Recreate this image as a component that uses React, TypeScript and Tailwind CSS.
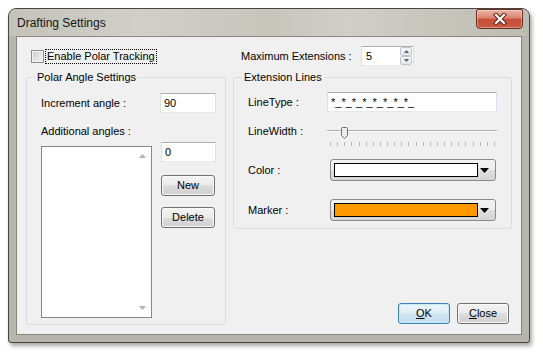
import React from "react";

function Checkbox() {
  return (
    <span className="w-[13px] h-[13px] border border-[#8e8f8f] bg-white flex items-center justify-center">
      <span className="w-[11px] h-[11px] border border-[#f4f4f4] bg-gradient-to-br from-[#cfcfcf] to-[#f6f6f6]" />
    </span>
  );
}

function TextBox({ value, className = "" }: { value: string; className?: string }) {
  return (
    <div
      className={
        "h-[20px] shrink-0 border border-[#abadb3] border-x-[#dbdfe6] border-b-[#e3e9ef] bg-white flex items-center pl-[3px] leading-[13px] " +
        className
      }
    >
      {value}
    </div>
  );
}

function Button({ children, def = false, className = "" }: { children: React.ReactNode; def?: boolean; className?: string }) {
  return (
    <div
      className={
        "h-[21px] shrink-0 rounded-[3px] border flex items-center justify-center leading-[13px] " +
        (def
          ? "border-[#3c7fb1] bg-[linear-gradient(#eef6fb,#e0eef7_50%,#d0e5f2_50%,#c5deee)] shadow-[inset_0_0_0_1px_#c6ebfb] "
          : "border-[#707070] bg-[linear-gradient(#f2f2f2,#ebebeb_50%,#dddddd_50%,#cfcfcf)] shadow-[inset_0_0_0_1px_#fbfbfb] ") +
        className
      }
    >
      {children}
    </div>
  );
}

function Combo({ color }: { color: string }) {
  return (
    <div className="ml-[3px] w-[166px] h-[22px] rounded-[3px] border border-[#8a8a8a] bg-[linear-gradient(#f4f4f4,#ececec_50%,#dfdfdf_50%,#d6d6d6)] flex items-center pl-[3px] pr-[6px]">
      <div className="w-[144px] h-[14px] border border-black" style={{ backgroundColor: color }} />
      <svg width="9" height="5" viewBox="0 0 9 5" className="ml-auto">
        <path d="M0 0 L9 0 L4.5 5 Z" fill="#000" />
      </svg>
    </div>
  );
}

function SpinBox() {
  return (
    <div className="w-[53px] h-[20px] border border-[#abadb3] border-x-[#dbdfe6] border-b-[#e3e9ef] bg-white flex items-center pl-[4px] pr-[1px] leading-[13px]">
      <span>5</span>
      <div className="ml-auto flex flex-col">
        <div className="w-[12px] h-[9px] border border-[#c2c8ce] rounded-[2px] bg-gradient-to-b from-[#f6f6f6] to-[#e2e5e8] flex items-center justify-center">
          <svg width="5" height="3" viewBox="0 0 5 3">
            <path d="M0 3 L5 3 L2.5 0 Z" fill="#4d6185" />
          </svg>
        </div>
        <div className="w-[12px] h-[9px] border border-[#c2c8ce] rounded-[2px] bg-gradient-to-b from-[#f6f6f6] to-[#e2e5e8] flex items-center justify-center">
          <svg width="5" height="3" viewBox="0 0 5 3">
            <path d="M0 0 L5 0 L2.5 3 Z" fill="#4d6185" />
          </svg>
        </div>
      </div>
    </div>
  );
}

function Slider() {
  const ticks = Array.from({ length: 24 }, (_, i) => i);
  return (
    <div className="w-[170px] h-[27px] flex flex-col">
      <div className="h-[12px] flex items-center relative">
        <div className="w-full h-[2px] border-t border-[#b0b0b0] border-b border-b-white bg-[#e7eaea]" />
        <svg width="7" height="12" viewBox="0 0 7 12" className="absolute left-[14px] top-[2px]">
          <path d="M0.5 1.5 Q0.5 0.5 1.5 0.5 L5.5 0.5 Q6.5 0.5 6.5 1.5 L6.5 8.5 L3.5 11.5 L0.5 8.5 Z" fill="#ececec" stroke="#707070" />
        </svg>
      </div>
      <div className="mt-[5px] pl-[3px] pr-[2px] flex justify-between">
        {ticks.map((t) => (
          <span key={t} className="w-[1px] h-[4px] bg-[#b9b9b9]" />
        ))}
      </div>
    </div>
  );
}

export default function App() {
  return (
    <div className="w-[543px] h-[352px] bg-white font-['Liberation_Sans',Arial,sans-serif] text-[11px] text-black">
      <div className="pl-[8px] pt-[8px]">
        <div className="w-[522px] h-[335px] flex flex-col rounded-t-[8px] rounded-b-[3px] border border-[#45453f] bg-[#b6b6ac] shadow-[2px_3px_4px_rgba(0,0,0,0.35)]">
          {/* Title bar */}
          <div className="h-[27px] flex items-start justify-between rounded-t-[7px] bg-[linear-gradient(90deg,#c3c3ba,#d0d0c8_25%,#c6c6bd_50%,#cfcfc7_65%,#bcbcb2)] pl-[8px] pr-[6px]">
            <span className="mt-[7px] text-[12px] leading-[15px] text-[#151515]">Drafting Settings</span>
            <div className="w-[47px] h-[20px] rounded-b-[4px] rounded-t-[2px] border border-[#6a2d22] bg-[linear-gradient(#eab2a4,#d98472_45%,#c8503a_50%,#c9583f)] flex items-center justify-center shadow-[inset_0_0_0_1px_rgba(255,255,255,0.35)]">
              <svg width="14" height="12" viewBox="0 0 14 12">
                <path d="M3 2 L11 10 M11 2 L3 10" stroke="#5a2119" strokeWidth="4.2" strokeLinecap="square" />
                <path d="M3 2 L11 10 M11 2 L3 10" stroke="#ffffff" strokeWidth="2.2" strokeLinecap="square" />
              </svg>
            </div>
          </div>
          {/* Client */}
          <div className="flex-1 mx-[7px] mb-[7px] border border-[#86867d] bg-[#f0f0f0] flex pl-[9px] pt-[9px] pb-[8px] gap-[7px]">
            {/* Left column */}
            <div className="w-[200px] flex flex-col">
              <div className="h-[20px] flex items-center pl-[5px]">
                <Checkbox />
                <span className="ml-[2px] px-[1px] leading-[13px] outline-1 outline-dotted outline-black">Enable Polar Tracking</span>
              </div>
              <fieldset className="mt-[4px] h-[255px] border border-[#d5dfe5] rounded-[3px] pl-[14px] pr-[9px]">
                <legend className="ml-[-6px] px-[2px] leading-[14px]">Polar Angle Settings</legend>
                <div className="mt-[9px] h-[20px] flex items-center justify-between">
                  <span>Increment angle :</span>
                  <TextBox value="90" className="w-[56px]" />
                </div>
                <div className="mt-[12px] h-[13px] leading-[13px]">Additional angles :</div>
                <div className="mt-[4px] flex justify-between items-start">
                  <div className="mt-[4px] shrink-0 w-[111px] h-[172px] border border-[#828790] bg-white flex">
                    <div className="flex-1" />
                    <div className="w-[17px] flex flex-col items-center justify-between pt-[7px] pb-[7px]">
                      <svg width="7" height="4" viewBox="0 0 7 4">
                        <path d="M0 4 L7 4 L3.5 0 Z" fill="#b5b5b5" />
                      </svg>
                      <svg width="7" height="4" viewBox="0 0 7 4">
                        <path d="M0 0 L7 0 L3.5 4 Z" fill="#b5b5b5" />
                      </svg>
                    </div>
                  </div>
                  <div className="w-[55px] flex flex-col">
                    <TextBox value="0" />
                    <Button className="mt-[13px] w-[54px]">New</Button>
                    <Button className="mt-[11px] w-[54px]">Delete</Button>
                  </div>
                </div>
              </fieldset>
            </div>
            {/* Right column */}
            <div className="w-[279px] flex flex-col">
              <div className="h-[20px] flex items-center pl-[8px]">
                <span className="w-[120px]">Maximum Extensions :</span>
                <SpinBox />
              </div>
              <fieldset className="mt-[4px] h-[159px] border border-[#d5dfe5] rounded-[3px] pl-[14px]">
                <legend className="ml-[-6px] px-[2px] leading-[14px]">Extension Lines</legend>
                <div className="mt-[8px] h-[20px] flex items-center">
                  <span className="w-[79px]">LineType :</span>
                  <TextBox value="*_*_*_*_*_*_*_*_" className="w-[170px]" />
                </div>
                <div className="mt-[13px] flex items-start">
                  <span className="w-[79px] leading-[13px]">LineWidth :</span>
                  <Slider />
                </div>
                <div className="mt-[7px] flex items-center">
                  <span className="w-[79px]">Color :</span>
                  <Combo color="#ffffff" />
                </div>
                <div className="mt-[18px] flex items-center">
                  <span className="w-[79px]">Marker :</span>
                  <Combo color="#ff9900" />
                </div>
              </fieldset>
              <div className="mt-auto mb-[2px] flex justify-end gap-[7px] pr-[3px]">
                <Button def className="w-[52px]">
                  <span><span className="underline">O</span>K</span>
                </Button>
                <Button className="w-[52px]">
                  <span><span className="underline">C</span>lose</span>
                </Button>
              </div>
            </div>
          </div>
        </div>
      </div>
    </div>
  );
}
